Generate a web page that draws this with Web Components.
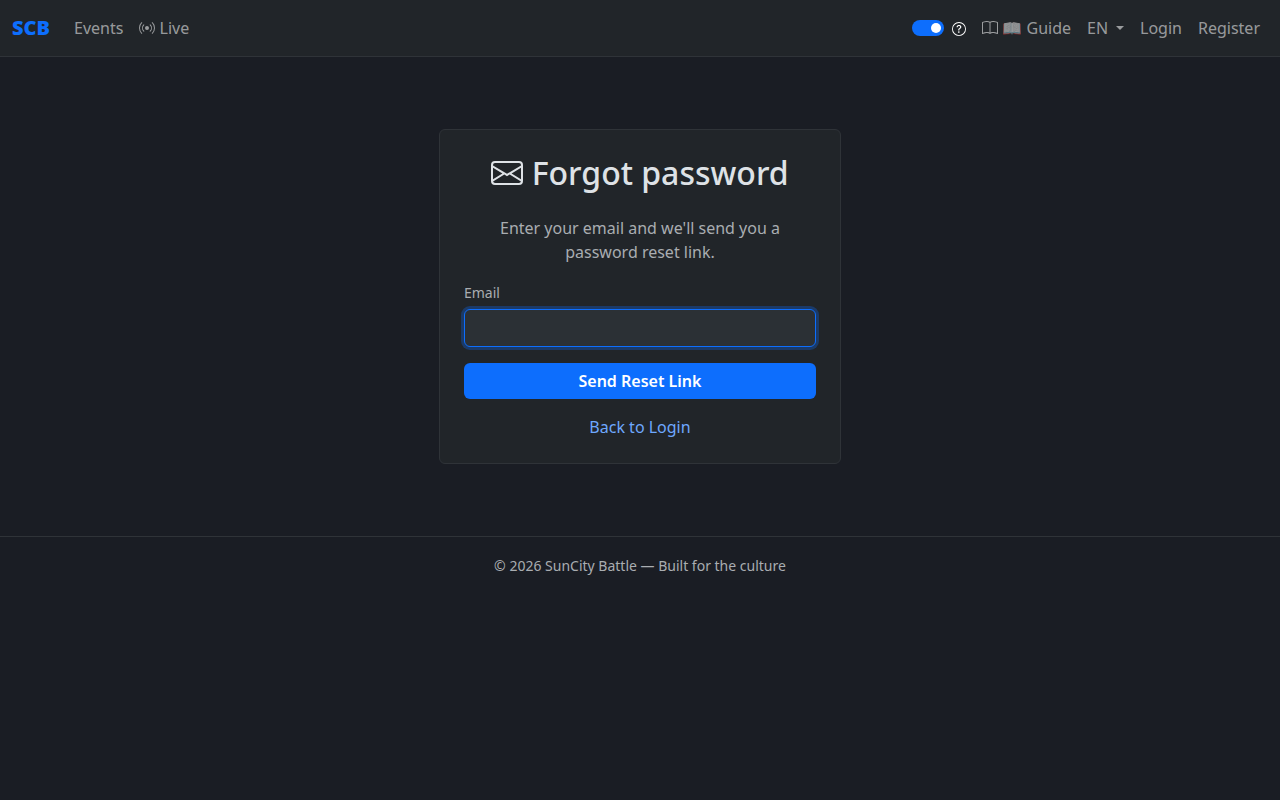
<!DOCTYPE html>
<html lang="en">
<head>
<meta charset="utf-8">
<meta name="viewport" content="width=device-width, initial-scale=1">
<title>Forgot password</title>
<style>
  :root {
    --primary: #0d6efd;
    --surface: #212529;
    --border: #2f3338;
    --text: #dee2e6;
    --muted: #a9adb1;
    --nav-link: rgba(255, 255, 255, 0.55);
  }

  body {
    margin: 0;
    background: #1a1d24;
    color: var(--text);
    font-family: "Noto Sans", "Liberation Sans", "Noto Color Emoji", sans-serif;
    font-size: 16px;
    line-height: 24px;
  }
</style>
</head>
<body>
<scb-navbar>
  <scb-nav-link href="#events">Events</scb-nav-link>
  <scb-nav-link href="#live" icon="broadcast">Live</scb-nav-link>
  <scb-theme-switch slot="end"></scb-theme-switch>
  <scb-nav-link slot="end" href="#guide" icon="book">📖 Guide</scb-nav-link>
  <scb-language-picker slot="end"></scb-language-picker>
  <scb-nav-link slot="end" href="#login">Login</scb-nav-link>
  <scb-nav-link slot="end" href="#register">Register</scb-nav-link>
</scb-navbar>

<scb-card>
  <span slot="title"><scb-icon name="envelope"></scb-icon> Forgot password</span>
  <span slot="intro">Enter your email and we'll send you a password reset link.</span>
  <scb-reset-form></scb-reset-form>
</scb-card>

<scb-footer>© 2026 SunCity Battle — Built for the culture</scb-footer>

<script>
  const icons = {
    envelope: '<path d="M0 4a2 2 0 0 1 2-2h12a2 2 0 0 1 2 2v8a2 2 0 0 1-2 2H2a2 2 0 0 1-2-2zm2-1a1 1 0 0 0-1 1v.217l7 4.2 7-4.2V4a1 1 0 0 0-1-1zm13 2.383-4.708 2.825L15 11.105zm-.034 6.876-5.64-3.471L8 9.583l-1.326-.795-5.64 3.47A1 1 0 0 0 2 13h12a1 1 0 0 0 .966-.741M1 11.105l4.708-2.897L1 5.383z"/>',
    broadcast: '<path d="M3.05 3.05a7 7 0 0 0 0 9.9.5.5 0 0 1-.707.707 8 8 0 0 1 0-11.314.5.5 0 0 1 .707.707m2.122 2.122a4 4 0 0 0 0 5.656.5.5 0 1 1-.708.708 5 5 0 0 1 0-7.072.5.5 0 0 1 .708.708m5.656-.708a.5.5 0 0 1 .708 0 5 5 0 0 1 0 7.072.5.5 0 1 1-.708-.708 4 4 0 0 0 0-5.656.5.5 0 0 1 0-.708m2.122-2.12a.5.5 0 0 1 .707 0 8 8 0 0 1 0 11.313.5.5 0 0 1-.707-.707 7 7 0 0 0 0-9.9.5.5 0 0 1 0-.707zM10 8a2 2 0 1 1-4 0 2 2 0 0 1 4 0"/>',
    book: '<path d="M1 2.828c.885-.37 2.154-.769 3.388-.893 1.33-.134 2.458.063 3.112.752v9.746c-.935-.53-2.12-.603-3.213-.493-1.18.12-2.37.461-3.287.811zm7.5-.141c.654-.689 1.782-.886 3.112-.752 1.234.124 2.503.523 3.388.893v9.923c-.918-.35-2.107-.692-3.287-.81-1.094-.111-2.278-.039-3.213.492zM8 1.783C7.015.936 5.587.81 4.287.94c-1.514.153-3.042.672-3.994 1.105A.5.5 0 0 0 0 2.5v11a.5.5 0 0 0 .707.455c.882-.4 2.303-.881 3.68-1.02 1.409-.142 2.59.087 3.223.877a.5.5 0 0 0 .78 0c.633-.79 1.814-1.019 3.222-.877 1.378.139 2.8.62 3.681 1.02A.5.5 0 0 0 16 13.5v-11a.5.5 0 0 0-.293-.455c-.952-.433-2.48-.952-3.994-1.105C10.413.809 8.985.936 8 1.783"/>',
    question: '<path d="M8 15A7 7 0 1 1 8 1a7 7 0 0 1 0 14m0 1A8 8 0 1 0 8 0a8 8 0 0 0 0 16"/><path d="M5.255 5.786a.237.237 0 0 0 .241.247h.825c.138 0 .248-.113.266-.25.09-.656.54-1.134 1.342-1.134.686 0 1.314.343 1.314 1.168 0 .635-.374.927-.965 1.371-.673.489-1.206 1.06-1.168 1.987l.003.217a.25.25 0 0 0 .25.246h.811a.25.25 0 0 0 .25-.25v-.105c0-.718.273-.927 1.01-1.486.609-.463 1.244-.977 1.244-2.056 0-1.511-1.276-2.241-2.673-2.241-1.267 0-2.655.59-2.75 2.286m1.557 5.763c0 .533.425.927 1.01.927.609 0 1.028-.394 1.028-.927 0-.552-.42-.94-1.029-.94-.584 0-1.009.388-1.009.94"/>'
  };

  class ScbIcon extends HTMLElement {
    constructor() {
      super();
      this.attachShadow({mode: 'open'});
    }

    connectedCallback() {
      this.shadowRoot.innerHTML = `
        <style>
          :host {
            display: inline-block;
            line-height: 1;
            vertical-align: -0.125em;
          }

          svg {
            display: block;
            width: 1em;
            height: 1em;
          }
        </style>
        <svg viewBox="0 0 16 16" fill="currentColor" aria-hidden="true">${icons[this.getAttribute('name')]}</svg>
      `;
    }
  }

  class ScbNavbar extends HTMLElement {
    constructor() {
      super();
      this.attachShadow({mode: 'open'});
      this.shadowRoot.innerHTML = `
        <style>
          :host {
            display: block;
            background: var(--surface);
            border-bottom: 1px solid var(--border);
          }

          nav {
            display: flex;
            align-items: center;
            padding: 8px 12px;
          }

          .brand {
            margin-right: 16px;
            color: var(--primary);
            font-size: 20px;
            font-weight: 900;
            line-height: 30px;
            text-decoration: none;
          }

          .links {
            display: flex;
            align-items: center;
          }

          .end {
            margin-left: auto;
          }
        </style>

        <nav>
          <a class="brand" href="#home">SCB</a>
          <div class="links"><slot></slot></div>
          <div class="links end"><slot name="end"></slot></div>
        </nav>
      `;
    }
  }

  class ScbNavLink extends HTMLElement {
    constructor() {
      super();
      this.attachShadow({mode: 'open'});
    }

    connectedCallback() {
      const icon = this.getAttribute('icon');

      this.shadowRoot.innerHTML = `
        <style>
          :host {
            display: block;
          }

          a {
            display: block;
            padding: 8px;
            color: var(--nav-link);
            text-decoration: none;
            white-space: nowrap;
          }

          a:hover {
            color: rgba(255, 255, 255, 0.75);
          }
        </style>
        <a href="${this.getAttribute('href')}">${icon ? `<scb-icon name="${icon}"></scb-icon> ` : ''}<slot></slot></a>
      `;
    }
  }

  class ScbThemeSwitch extends HTMLElement {
    constructor() {
      super();
      this.attachShadow({mode: 'open'});
      this.shadowRoot.innerHTML = `
        <style>
          :host {
            display: flex;
            align-items: center;
            gap: 8px;
            margin-right: 8px;
          }

          input {
            appearance: none;
            display: flex;
            align-items: center;
            width: 32px;
            height: 16px;
            margin: 0;
            padding: 0 3px;
            box-sizing: border-box;
            border-radius: 8px;
            background: #495057;
            cursor: pointer;
          }

          input::before {
            content: "";
            width: 10px;
            height: 10px;
            border-radius: 50%;
            background: #fff;
          }

          input:checked {
            justify-content: flex-end;
            background: var(--primary);
          }

          button {
            display: block;
            padding: 2px 0 0;
            border: 0;
            background: none;
            color: #fff;
            font-size: 14px;
            cursor: pointer;
          }

          scb-icon {
            display: block;
          }
        </style>

        <input type="checkbox" role="switch" aria-label="Tooltips" checked>
        <button type="button" aria-label="Help"><scb-icon name="question"></scb-icon></button>
      `;
    }
  }

  class ScbLanguagePicker extends HTMLElement {
    constructor() {
      super();
      this.attachShadow({mode: 'open'});
      this.shadowRoot.innerHTML = `
        <style>
          :host {
            display: block;
            position: relative;
            color: var(--nav-link);
          }

          select {
            appearance: none;
            display: block;
            padding: 8px 23px 8px 8px;
            border: 0;
            background: none;
            color: inherit;
            font: inherit;
            cursor: pointer;
          }

          option {
            background: var(--surface);
            color: var(--text);
          }

          .caret {
            position: absolute;
            top: 18px;
            right: 8px;
            border: 4px solid transparent;
            border-top-color: currentColor;
            border-bottom: 0;
            pointer-events: none;
          }
        </style>

        <select aria-label="Language">
          <option>EN</option>
        </select>
        <span class="caret"></span>
      `;
    }
  }

  class ScbCard extends HTMLElement {
    constructor() {
      super();
      this.attachShadow({mode: 'open'});
      this.shadowRoot.innerHTML = `
        <style>
          :host {
            display: block;
            padding: 72px 12px;
          }

          section {
            max-width: 352px;
            margin: 0 auto;
            padding: 24px;
            border: 1px solid var(--border);
            border-radius: 6px;
            background: var(--surface);
          }

          h1 {
            margin: 0 0 24px;
            font-size: 32px;
            font-weight: 500;
            line-height: 38px;
            text-align: center;
          }

          p {
            margin: 0 0 16px;
            color: var(--muted);
            text-align: center;
          }
        </style>

        <section>
          <h1><slot name="title"></slot></h1>
          <p><slot name="intro"></slot></p>
          <slot></slot>
        </section>
      `;
    }
  }

  class ScbResetForm extends HTMLElement {
    constructor() {
      super();
      this.attachShadow({mode: 'open'});
      this.shadowRoot.innerHTML = `
        <style>
          :host {
            display: block;
          }

          form {
            display: flex;
            flex-direction: column;
          }

          label {
            margin-bottom: 4px;
            color: var(--muted);
            font-size: 14px;
            line-height: 25px;
          }

          input {
            margin-bottom: 16px;
            padding: 6px 12px;
            border: 1px solid #495057;
            border-radius: 6px;
            background: #2b3035;
            color: var(--text);
            font: inherit;
            outline: 0;
          }

          input:focus {
            border-color: var(--primary);
            box-shadow: 0 0 0 3px rgba(13, 110, 253, 0.3);
          }

          button {
            margin-bottom: 16px;
            padding: 6px 12px;
            border: 0;
            border-radius: 6px;
            background: var(--primary);
            color: #fff;
            font: inherit;
            font-weight: 600;
            cursor: pointer;
          }

          a {
            align-self: center;
            color: #6ea8fe;
            text-decoration: none;
          }
        </style>

        <form>
          <label for="email">Email</label>
          <input id="email" type="email" name="email" autocomplete="email" required>
          <button type="submit">Send Reset Link</button>
          <a href="#login">Back to Login</a>
        </form>
      `;
    }

    connectedCallback() {
      this.shadowRoot.querySelector('#email').focus();
    }
  }

  class ScbFooter extends HTMLElement {
    constructor() {
      super();
      this.attachShadow({mode: 'open'});
      this.shadowRoot.innerHTML = `
        <style>
          :host {
            display: block;
            border-top: 1px solid var(--border);
          }

          footer {
            padding: 18px 12px;
            color: var(--muted);
            font-size: 14px;
            line-height: 21px;
            text-align: center;
          }
        </style>

        <footer><slot></slot></footer>
      `;
    }
  }

  customElements.define('scb-icon', ScbIcon);
  customElements.define('scb-navbar', ScbNavbar);
  customElements.define('scb-nav-link', ScbNavLink);
  customElements.define('scb-theme-switch', ScbThemeSwitch);
  customElements.define('scb-language-picker', ScbLanguagePicker);
  customElements.define('scb-card', ScbCard);
  customElements.define('scb-reset-form', ScbResetForm);
  customElements.define('scb-footer', ScbFooter);
</script>
</body>
</html>
